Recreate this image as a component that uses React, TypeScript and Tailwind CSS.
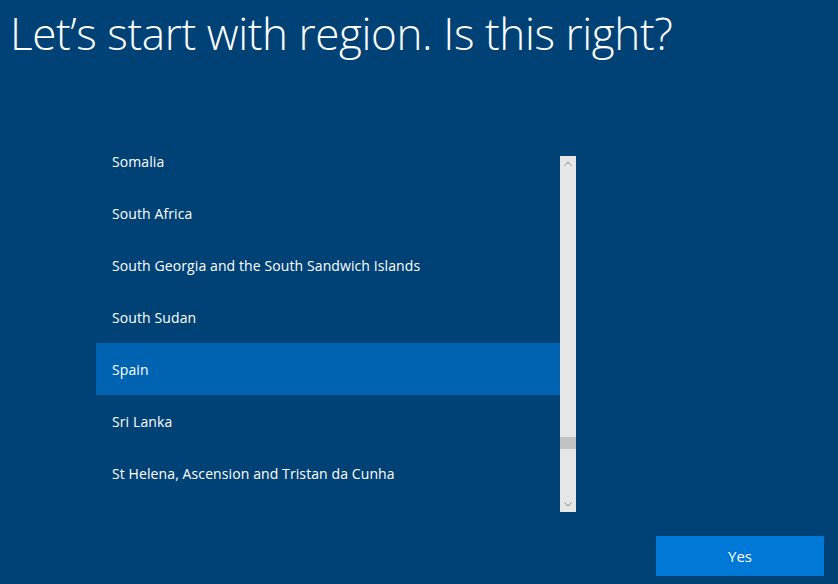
import React from 'react';

const regions = [
    'Somalia',
    'South Africa',
    'South Georgia and the South Sandwich Islands',
    'South Sudan',
    'Spain',
    'Sri Lanka',
    'St Helena, Ascension and Tristan da Cunha',
];

export default function App() {
    const selected = 'Spain';

    return (
        <div
            className="w-[838px] h-[584px] bg-[#004275] text-white flex flex-col overflow-hidden"
            style={{ fontFamily: '"Open Sans", "Noto Sans", sans-serif' }}
        >
            <h1 className="pl-[10px] pt-[2px] text-[44px] font-light leading-[62px] tracking-[-0.4px]">
                Let’s start with region. Is this right?
            </h1>

            <div className="flex items-start pl-[96px] mt-[71px]">
                {/* List */}
                <div className="w-[464px]">
                    {regions.map((r) => (
                        <div
                            key={r}
                            className={`h-[52px] flex items-center pl-[16px] text-[14px] tracking-[0.1px] ${r === selected ? 'bg-[#0063b1]' : ''}`}
                        >
                            {r}
                        </div>
                    ))}
                </div>

                {/* Scrollbar */}
                <div className="mt-[21px] w-[16px] h-[356px] bg-[#e6e6e6] flex flex-col items-center">
                    <svg width="16" height="14" viewBox="0 0 16 14" className="mt-[1px]">
                        <path d="M4.5 8.5 L8 5 L11.5 8.5" fill="none" stroke="#8a8a8a" strokeWidth="1" />
                    </svg>
                    <div className="flex-1 w-full relative">
                        <div className="absolute left-0 right-0 top-[266px] h-[12px] bg-[#c2c2c2]" />
                    </div>
                    <svg width="16" height="14" viewBox="0 0 16 14" className="mb-[1px]">
                        <path d="M4.5 5.5 L8 9 L11.5 5.5" fill="none" stroke="#8a8a8a" strokeWidth="1" />
                    </svg>
                </div>
            </div>

            <div className="flex justify-end pr-[14px] mt-[24px]">
                <button className="w-[168px] h-[40px] bg-[#0078d7] text-[15px] text-white">Yes</button>
            </div>
        </div>
    );
}
